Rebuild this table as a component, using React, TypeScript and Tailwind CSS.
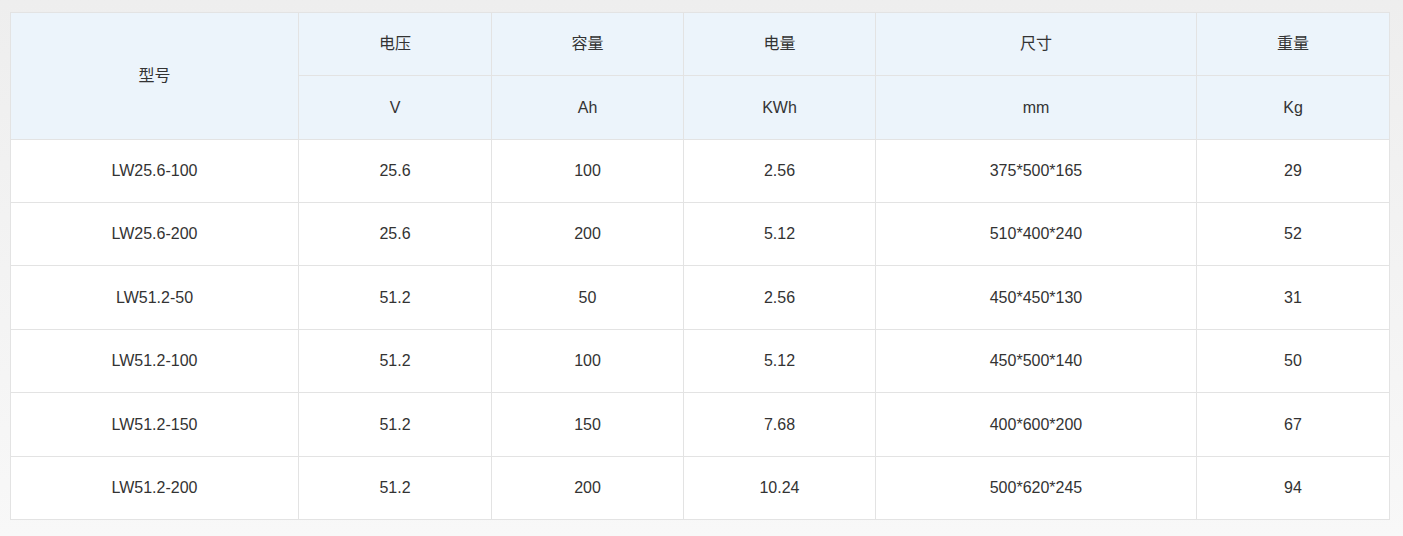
import React from "react";

const rows = [
  ["LW25.6-100", "25.6", "100", "2.56", "375*500*165", "29"],
  ["LW25.6-200", "25.6", "200", "5.12", "510*400*240", "52"],
  ["LW51.2-50", "51.2", "50", "2.56", "450*450*130", "31"],
  ["LW51.2-100", "51.2", "100", "5.12", "450*500*140", "50"],
  ["LW51.2-150", "51.2", "150", "7.68", "400*600*200", "67"],
  ["LW51.2-200", "51.2", "200", "10.24", "500*620*245", "94"],
];
const heights = ["h-[63px]", "h-[63px]", "h-[64px]", "h-[63px]", "h-[64px]", "h-[63px]"];

export default function App() {
  return (
    <div
      className="w-[1403px] h-[536px] bg-gradient-to-b from-[#eeeeee] to-[#f8f8f8] pt-[12px] pl-[10px] text-[#333333]"
      style={{ fontFamily: '"Liberation Sans", Arial, "Noto Sans CJK SC", sans-serif' }}
    >
      <table className="table-fixed border-collapse w-[1380px] text-[16px] text-center bg-white">
        <colgroup>
          <col className="w-[288px]" />
          <col className="w-[193px]" />
          <col className="w-[192px]" />
          <col className="w-[192px]" />
          <col className="w-[321px]" />
          <col className="w-[193px]" />
        </colgroup>
        <thead>
          <tr className="h-[63px] bg-[#ecf4fb]">
            <td rowSpan={2} className="border border-[#e3e3e3] font-normal">型号</td>
            <td className="border border-[#e3e3e3]">电压</td>
            <td className="border border-[#e3e3e3]">容量</td>
            <td className="border border-[#e3e3e3]">电量</td>
            <td className="border border-[#e3e3e3]">尺寸</td>
            <td className="border border-[#e3e3e3]">重量</td>
          </tr>
          <tr className="h-[64px] bg-[#ecf4fb]">
            <td className="border border-[#e3e3e3]">V</td>
            <td className="border border-[#e3e3e3]">Ah</td>
            <td className="border border-[#e3e3e3]">KWh</td>
            <td className="border border-[#e3e3e3]">mm</td>
            <td className="border border-[#e3e3e3]">Kg</td>
          </tr>
        </thead>
        <tbody>
          {rows.map((r, i) => (
            <tr key={i} className={heights[i]}>
              {r.map((c, j) => (
                <td key={j} className="border border-[#e3e3e3]">{c}</td>
              ))}
            </tr>
          ))}
        </tbody>
      </table>
    </div>
  );
}
